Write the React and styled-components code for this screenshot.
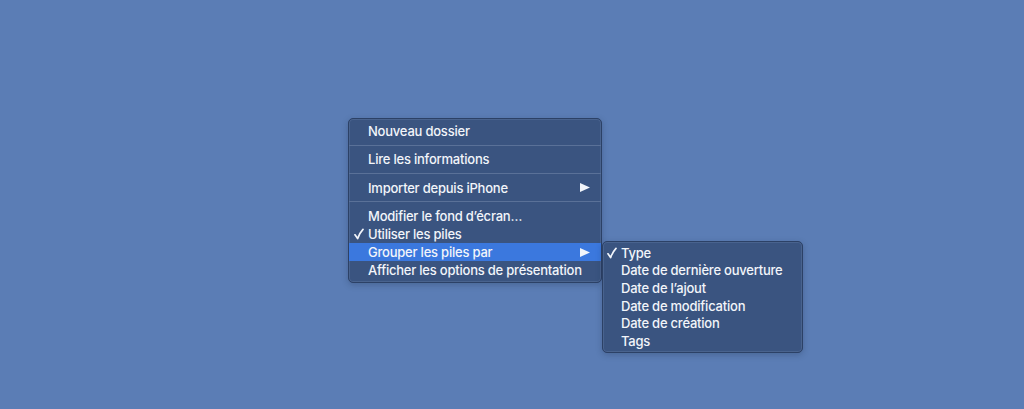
import React from "react";
import styled, { createGlobalStyle } from "styled-components";

const GlobalStyle = createGlobalStyle`
	html, body {
		margin: 0;
		padding: 0;
		background: #5b7db5;
	}
	body {
		font-family: Inter, "Liberation Sans", sans-serif;
	}
`;

const mainItems = [
	{ label: "Nouveau dossier" },
	{ sep: true },
	{ label: "Lire les informations" },
	{ sep: true },
	{ label: "Importer depuis iPhone", sub: true },
	{ sep: true },
	{ label: "Modifier le fond d’écran…" },
	{ label: "Utiliser les piles", checked: true },
	{ label: "Grouper les piles par", sub: true, active: true },
	{ label: "Afficher les options de présentation" },
];

const subItems = [
	{ label: "Type", checked: true },
	{ label: "Date de dernière ouverture" },
	{ label: "Date de l’ajout" },
	{ label: "Date de modification" },
	{ label: "Date de création" },
	{ label: "Tags" },
];

function Arrow() {
	return (
		<ArrowIcon width="10" height="9" viewBox="0 0 10 9">
			<path d="M0 0 L10 4.5 L0 9 Z" fill="#f2f5fa" />
		</ArrowIcon>
	);
}

function CheckMark() {
	return (
		<svg width="10" height="12" viewBox="0 0 10 12">
			<path
				d="M1 6.8 L3.6 10.6 Q5.6 5 9 1.4"
				fill="none"
				stroke="#f2f5fa"
				strokeWidth="1.7"
				strokeLinecap="round"
				strokeLinejoin="round"
			/>
		</svg>
	);
}

function App() {
	return (
		<Desktop>
			<GlobalStyle />
			<Menu>
				{mainItems.map((item, i) =>
					item.sep ? (
						<Separator key={i} />
					) : (
						<Item key={i} active={item.active}>
							<Check>{item.checked && <CheckMark />}</Check>
							<Label>{item.label}</Label>
							{item.sub && <Arrow />}
						</Item>
					)
				)}
				<SubMenu>
					{subItems.map((item, i) => (
						<SubItem key={i}>
							<Check>{item.checked && <CheckMark />}</Check>
							<Label>{item.label}</Label>
						</SubItem>
					))}
				</SubMenu>
			</Menu>
		</Desktop>
	);
}

export default App;

const Desktop = styled.div`
	position: relative;
	width: 1024px;
	height: 409px;
	background: #5b7db5;
	overflow: hidden;
`;

const Panel = styled.div`
	position: absolute;
	box-sizing: border-box;
	background: #3a5480;
	border: 1px solid #2c4166;
	border-radius: 5px;
	box-shadow: inset 0 0 0 1px rgba(120, 145, 185, 0.25),
		0 2px 6px rgba(20, 35, 60, 0.25);
	color: #f2f5fa;
	font-size: 13px;
`;

const Menu = styled(Panel)`
	left: 348px;
	top: 118px;
	width: 254px;
	height: 165px;
	padding: 3px 0 4px;
`;

const SubMenu = styled(Panel)`
	left: 253px;
	top: 122px;
	width: 201px;
	height: 112px;
	padding: 2px 0 3px;
`;

const Item = styled.div`
	display: flex;
	align-items: center;
	height: 18px;
	padding: 0 11px 0 5px;
	background: ${(p) => (p.active ? "#3b78de" : "transparent")};
`;

const SubItem = styled(Item)`
	height: 17.6px;
	padding-left: 4px;
`;

const Check = styled.span`
	display: flex;
	align-items: center;
	width: 14px;
	height: 18px;
`;

const Label = styled.span`
	flex: 1;
	white-space: nowrap;
	font-weight: 500;
	letter-spacing: -0.22px;
`;

const ArrowIcon = styled.svg`
	display: block;
`;

const Separator = styled.div`
	height: 10.4px;
	display: flex;
	align-items: center;

	&::after {
		content: "";
		flex: 1;
		height: 1px;
		background: #5a7198;
	}
`;
